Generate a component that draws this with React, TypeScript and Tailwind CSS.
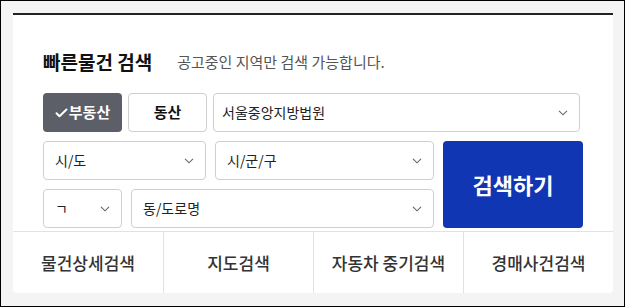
import { ReactNode } from 'react'

function Chevron() {
  return (
    <svg width="10" height="6" viewBox="0 0 10 6" fill="none" stroke="#666" strokeWidth="1.1">
      <path d="M1 0.8 5 4.8 9 0.8" />
    </svg>
  )
}

function Select({ className, children, pad = 'px-[11px]' }: { className: string; children: ReactNode; pad?: string }) {
  return (
    <div
      className={`flex items-center justify-between rounded-[4px] border border-[#cfcfcf] bg-white ${pad} text-[14px] text-[#222] ${className}`}
    >
      <span>{children}</span>
      <Chevron />
    </div>
  )
}

const tabs = ['물건상세검색', '지도검색', '자동차 중기검색', '경매사건검색']

export default function App() {
  return (
    <div
      className="h-[307px] w-[625px] border border-black bg-[#f4f4f4] pl-[12px] pr-[11px] pt-[12px]"
      style={{ fontFamily: '"Noto Sans CJK KR", "Noto Sans", sans-serif' }}
    >
      <div className="flex h-[280px] flex-col rounded-b-[4px] border-t-2 border-[#222] bg-white">
        <div className="px-[30px] pt-[33px]">
          <div className="flex items-center">
            <h2 className="text-[19px] font-bold leading-[28px] text-[#111]">빠른물건 검색</h2>
            <p className="ml-[25px] text-[15px] leading-[28px] text-[#555]">공고중인 지역만 검색 가능합니다.</p>
          </div>

          <div className="mt-[17px] flex h-[39px] gap-[6px] pr-[3px]">
            <button className="flex w-[79px] items-center justify-center gap-[1px] rounded-[4px] bg-[#5c5f67] text-[15px] font-bold text-white">
              <svg width="13" height="10" viewBox="0 0 13 10" fill="none" stroke="white" strokeWidth="2" strokeLinecap="round" strokeLinejoin="round">
                <path d="M1.5 5.2 4.5 8.2 11.5 1.5" />
              </svg>
              부동산
            </button>
            <button className="w-[79px] rounded-[4px] border border-[#cfcfcf] bg-white text-[15px] font-bold text-[#111]">
              동산
            </button>
            <Select className="flex-1" pad="pl-[8px] pr-[11px]">서울중앙지방법원</Select>
          </div>

          <div className="mt-[9px] flex gap-[9px]">
            <div className="flex w-[391px] flex-col gap-[9px]">
              <div className="flex h-[39px] gap-[9px]">
                <Select className="w-[163px]">시/도</Select>
                <Select className="flex-1">시/군/구</Select>
              </div>
              <div className="flex h-[39px] gap-[9px]">
                <Select className="w-[79px]">ㄱ</Select>
                <Select className="flex-1">동/도로명</Select>
              </div>
            </div>
            <button className="flex-1 rounded-[4px] bg-[#1136b4] text-[22px] font-bold text-white">검색하기</button>
          </div>
        </div>

        <div className="mt-[3px] grid flex-1 grid-cols-4 border-t border-[#e2e2e2]">
          {tabs.map((t, i) => (
            <div
              key={t}
              className={`flex items-center justify-center text-[17px] font-medium text-[#333] ${i > 0 ? 'border-l border-[#e2e2e2]' : ''}`}
            >
              {t}
            </div>
          ))}
        </div>
      </div>
    </div>
  )
}
